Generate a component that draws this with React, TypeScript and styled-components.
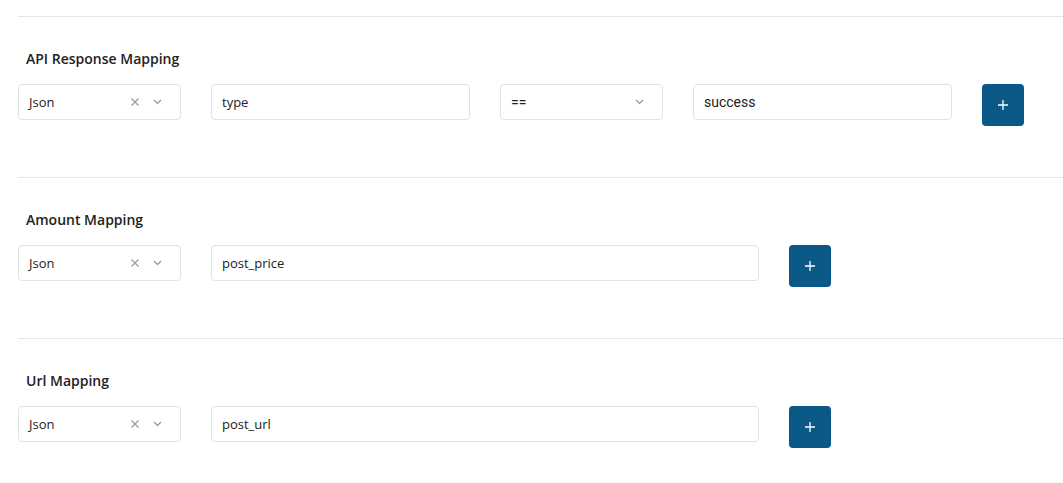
import React from "react";
import styled, { createGlobalStyle } from "styled-components";

const Global = createGlobalStyle`
  html, body { margin: 0; padding: 0; background: #fff; }
  body { font-family: "Open Sans", "Liberation Sans", sans-serif; color: #333; }
`;

const Page = styled.div`
  padding: 16px 0 0 18px;
`;

const Section = styled.section`
  border-top: 1px solid #e6e6e6;
  padding: 33px 0 51px 0;
`;

const Heading = styled.h3`
  margin: 0 0 16px 8px;
  font-size: 14px;
  line-height: 18px;
  font-weight: 600;
  color: #222;
`;

const Row = styled.div`
  display: flex;
  gap: 30px;
  align-items: flex-start;
`;

const Box = styled.div<{ $width: number }>`
  box-sizing: border-box;
  width: ${(p) => p.$width}px;
  flex: none;
  height: 36px;
  border: 1px solid #e2e2e2;
  border-radius: 4px;
  display: flex;
  align-items: center;
  padding: 0 10px;
  font-size: 13px;
  color: #222;
  background: #fff;
`;

const Value = styled.span<{ $alt?: boolean }>`
  flex: 1;
  font-family: ${(p) => (p.$alt ? `Roboto, "Liberation Sans", sans-serif` : `"Open Sans", sans-serif`)};
  font-size: ${(p) => (p.$alt ? 14 : 13)}px;
`;

const Icons = styled.span`
  display: flex;
  align-items: center;
  gap: 13px;
  margin-right: 8px;
`;

const AddButton = styled.button`
  width: 42px;
  height: 42px;
  flex: none;
  border: none;
  border-radius: 4px;
  background: #0a5886;
  display: flex;
  align-items: center;
  justify-content: center;
  padding: 0;
  cursor: pointer;
`;

const Cross = () => (
  <svg width="10" height="10" viewBox="0 0 10 10">
    <path d="M1.5 1.5 L8.5 8.5 M8.5 1.5 L1.5 8.5" stroke="#9a9a9a" strokeWidth="1.2" fill="none" />
  </svg>
);

const Chevron = () => (
  <svg width="9" height="6" viewBox="0 0 9 6">
    <path d="M1 1 L4.5 4.5 L8 1" stroke="#8a8f98" strokeWidth="1.1" fill="none" />
  </svg>
);

const Plus = () => (
  <svg width="12" height="12" viewBox="0 0 12 12">
    <path d="M6 1 V11 M1 6 H11" stroke="#fff" strokeWidth="1.3" fill="none" />
  </svg>
);

const Select: React.FC<{ value: string; clearable?: boolean; alt?: boolean }> = ({ value, clearable, alt }) => (
  <Box $width={163}>
    <Value $alt={alt}>{value}</Value>
    <Icons>
      {clearable && <Cross />}
      <Chevron />
    </Icons>
  </Box>
);

const Input: React.FC<{ value: string; width: number; alt?: boolean }> = ({ value, width, alt }) => (
  <Box $width={width}>
    <Value $alt={alt}>{value}</Value>
  </Box>
);

export default function App() {
  return (
    <Page>
      <Global />
      <Section>
        <Heading>API Response Mapping</Heading>
        <Row>
          <Select value="Json" clearable />
          <Input value="type" width={259} />
          <Select value="==" alt />
          <Input value="success" width={259} alt />
          <AddButton><Plus /></AddButton>
        </Row>
      </Section>
      <Section>
        <Heading>Amount Mapping</Heading>
        <Row>
          <Select value="Json" clearable />
          <Input value="post_price" width={548} />
          <AddButton><Plus /></AddButton>
        </Row>
      </Section>
      <Section>
        <Heading>Url Mapping</Heading>
        <Row>
          <Select value="Json" clearable />
          <Input value="post_url" width={548} />
          <AddButton><Plus /></AddButton>
        </Row>
      </Section>
    </Page>
  );
}
